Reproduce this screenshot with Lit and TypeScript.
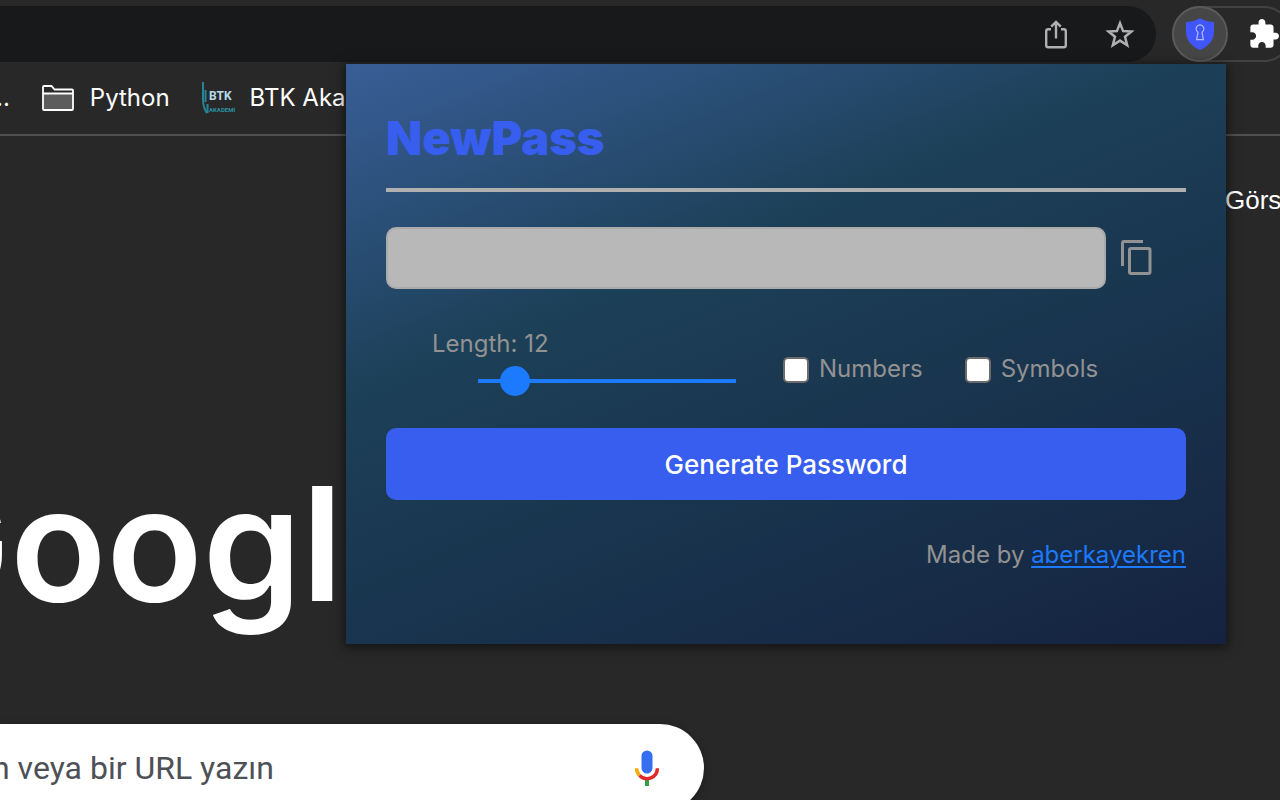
import { LitElement, html, css } from "lit";
import { customElement, state } from "lit/decorators.js";

@customElement("browser-chrome")
class BrowserChrome extends LitElement {
  static styles = css`
    :host {
      display: block;
      color: #fff;
      font-family: Inter, "Noto Sans", sans-serif;
    }
    .toolbar {
      display: flex;
      gap: 16px;
      padding: 6px 0 2px;
    }
    .address {
      flex: 1;
      display: flex;
      align-items: center;
      justify-content: flex-end;
      gap: 32px;
      height: 56px;
      padding-right: 20px;
      box-sizing: border-box;
      border-radius: 0 28px 28px 0;
      background: #18191b;
    }
    button {
      display: flex;
      align-items: center;
      justify-content: center;
      padding: 0;
      border: 0;
      background: none;
      color: inherit;
      font: inherit;
    }
    svg {
      display: block;
      flex: none;
    }
    .extensions {
      display: flex;
      align-items: center;
      gap: 21px;
      width: 120px;
      height: 56px;
      margin-right: -12px;
      box-sizing: border-box;
      border: 2px solid #424242;
      border-radius: 28px;
    }
    .active {
      flex: none;
      width: 56px;
      height: 56px;
      margin-left: -2px;
      box-sizing: border-box;
      border: 2px solid #5a5a5a;
      border-radius: 50%;
      background: #464646;
    }
    .puzzle {
      flex: none;
    }
    .bookmarks {
      display: flex;
      align-items: center;
      gap: 32px;
      height: 72px;
      margin-left: -4px;
      padding-bottom: 2px;
      box-sizing: border-box;
      border-bottom: 2px solid #505050;
      font-size: 24px;
      line-height: 32px;
    }
    .bookmarks a {
      display: flex;
      align-items: center;
      gap: 16px;
      color: inherit;
      text-decoration: none;
      white-space: nowrap;
    }
    .btk {
      display: block;
      width: 32px;
      height: 32px;
      overflow: visible;
    }
  `;

  render() {
    return html`
      <div class="toolbar">
        <div class="address">
          <button aria-label="Share">
            <svg width="32" height="32" viewBox="0 0 32 32" fill="none" stroke="#b0b0b0" stroke-width="2.4">
              <path d="M11 11.2H8.200Q6.200 11.200 6.200 13.200V27.200Q6.200 29.200 8.200 29.200H23.800Q25.800 29.200 25.800 27.200V13.200Q25.800 11.200 23.800 11.200H21" />
              <path d="M16 20.500V4M11.200 8.700L16 3.900L20.800 8.700" />
            </svg>
          </button>
          <button aria-label="Bookmark">
            <svg width="32" height="32" viewBox="0 0 32 32" fill="none" stroke="#b0b0b0" stroke-width="2.5">
              <path d="M16 5.200L19.100 13.100L27.400 13.500L21 18.800L23.200 27.200L16 22.600L8.800 27.200L11 18.800L4.600 13.500L12.900 13.100Z" />
            </svg>
          </button>
        </div>
        <div class="extensions">
          <button class="active" aria-label="NewPass">
            <svg width="32" height="36" viewBox="0 0 32 36">
              <path d="M16 2C12 4.500 7 6 2 6V16C2 24 8 31 16 34C24 31 30 24 30 16V6C25 6 20 4.500 16 2Z" fill="#4055fa" />
              <path d="M14 16.200A3.900 3.900 0 1 1 18 16.200L19.400 23.600H12.600Z" fill="none" stroke="#b4bcff" stroke-width="1.200" />
            </svg>
          </button>
          <button class="puzzle" aria-label="Extensions">
            <svg width="30" height="30" viewBox="1 1 22 22" fill="#fff">
              <path d="M20.500 11H19V7c0-1.100-.9-2-2-2h-4V3.500C13 2.120 11.880 1 10.500 1S8 2.120 8 3.500V5H4c-1.100 0-1.990.9-1.990 2v3.800H3.500c1.490 0 2.700 1.210 2.700 2.700s-1.210 2.700-2.700 2.700H2V20c0 1.100.9 2 2 2h3.800v-1.500c0-1.490 1.210-2.700 2.700-2.700s2.700 1.210 2.700 2.700V22H17c1.100 0 2-.9 2-2v-4h1.500c1.380 0 2.500-1.120 2.500-2.500S21.880 11 20.500 11z" />
            </svg>
          </button>
        </div>
      </div>
      <nav class="bookmarks">
        <a href="#">..</a>
        <a href="#">
          <svg width="32" height="26" viewBox="0 0 32 26">
            <path d="M1 8.500H31V25H1Z" fill="#5c5c5c" />
            <path d="M1 8.500H31M2 1H9.500L12.500 4.500H30Q31 4.500 31 5.500V24Q31 25 30 25H2Q1 25 1 24V2Q1 1 2 1Z" fill="none" stroke="#fff" stroke-width="1.800" />
          </svg>
          <span>Python</span>
        </a>
        <a href="#">
          <svg class="btk" viewBox="0 0 32 32">
            <path d="M1 0V18Q1.500 27 5 31M3.500 8V20M5.500 22V31" fill="none" stroke="#268494" stroke-width="2" />
            <text x="7" y="18" font-family="Roboto, sans-serif" font-weight="700" font-size="12" fill="#b5dcea">BTK</text>
            <text x="7" y="30" font-family="Roboto, sans-serif" font-weight="700" font-size="6" fill="#2794a4">AKADEMİ</text>
          </svg>
          <span>BTK Aka</span>
        </a>
      </nav>
    `;
  }
}

@customElement("start-page")
class StartPage extends LitElement {
  static styles = css`
    :host {
      display: flex;
      flex-direction: column;
      align-items: flex-start;
      color: #fff;
    }
    .links {
      align-self: flex-end;
      width: 55px;
      padding-top: 48px;
      overflow: hidden;
      color: inherit;
      font: 26px/32px "Liberation Sans", sans-serif;
      text-decoration: none;
      white-space: nowrap;
    }
    .wordmark {
      margin: 228px 0 0 -108px;
      font: 600 158px/200px Inter, sans-serif;
    }
    .search {
      display: flex;
      align-items: center;
      width: 55%;
      height: 88px;
      margin-top: 80px;
      box-sizing: border-box;
      padding-right: 41px;
      border-radius: 0 44px 44px 0;
      background: #fff;
      box-shadow: 0 2px 8px rgba(0, 0, 0, 0.3);
    }
    input {
      flex: 1;
      min-width: 0;
      height: 48px;
      margin-left: -8px;
      padding: 0;
      border: 0;
      outline: 0;
      background: none;
      color: #4d5156;
      font: 32px/48px Roboto, sans-serif;
    }
    input::placeholder {
      color: #4d5156;
      opacity: 1;
    }
    button {
      padding: 0;
      border: 0;
      background: none;
    }
    svg {
      display: block;
    }
  `;

  render() {
    return html`
      <a class="links" href="#">Görs</a>
      <div class="wordmark">Google</div>
      <form class="search">
        <input aria-label="Search" placeholder="n veya bir URL yazın" />
        <button type="button" aria-label="Voice search">
          <svg width="32" height="40" viewBox="0 0 32 40">
            <rect x="10.500" y="2.500" width="11" height="23" rx="5.500" fill="#356ef1" />
            <path d="M14 31H18V38H14Z" fill="#34a048" />
            <path d="M5.600 20.200A10.400 10.400 0 0 0 8.500 27.400" fill="none" stroke="#f4ab0c" stroke-width="3.500" />
            <path d="M8.500 27.400A10.400 10.400 0 0 0 26.400 20.200" fill="none" stroke="#e02a2a" stroke-width="3.500" />
          </svg>
        </button>
      </form>
    `;
  }
}

@customElement("password-popup")
class PasswordPopup extends LitElement {
  static styles = css`
    :host {
      display: block;
      box-sizing: border-box;
      padding: 48px 40px 73px;
      background: linear-gradient(158deg, #395e97, #1c4057 36%, #152340);
      box-shadow: 0 2px 10px 2px rgba(0, 0, 0, 0.5);
      color: #929292;
      font: 24px/32px Inter, sans-serif;
    }
    h1 {
      margin: 0;
      padding-bottom: 24px;
      border-bottom: 4px solid #b0b0b0;
      color: #375eee;
      font: 900 47px/52px Inter, sans-serif;
    }
    .result {
      display: flex;
      align-items: center;
      gap: 12px;
      margin-top: 35px;
    }
    .result input {
      width: 90%;
      height: 62px;
      box-sizing: border-box;
      padding: 0 16px;
      border: 2px solid #aaa;
      border-radius: 10px;
      background: #b8b8b8;
      font: inherit;
    }
    button {
      padding: 0;
      border: 0;
      background: none;
    }
    svg {
      display: block;
    }
    .options {
      display: flex;
      margin-top: 39px;
      padding-left: 46px;
    }
    .length {
      width: 305px;
    }
    .length label {
      display: block;
    }
    .length input {
      appearance: none;
      display: block;
      width: 258px;
      height: 30px;
      margin: 6px 0 0 46px;
      background: linear-gradient(#1c7aff, #1c7aff) center / 100% 4px no-repeat;
    }
    .length input::-webkit-slider-thumb {
      appearance: none;
      width: 30px;
      height: 30px;
      border-radius: 50%;
      background: #1c7aff;
    }
    .check {
      display: flex;
      align-items: center;
      gap: 10px;
      height: 32px;
      margin: 25px 0 0 46px;
    }
    .check + .check {
      margin-left: 42px;
    }
    .check input {
      appearance: none;
      width: 26px;
      height: 26px;
      margin: 2px 0 0;
      box-sizing: border-box;
      border: 2px solid #6b6b6b;
      border-radius: 5px;
      background: #fff;
    }
    .generate {
      display: block;
      width: 100%;
      height: 72px;
      margin-top: 32px;
      padding-top: 2px;
      border-radius: 10px;
      background: #375eee;
      color: #fff;
      font: 500 26px/32px Inter, sans-serif;
    }
    .credit {
      margin: 39px 0 0;
      text-align: right;
    }
    .credit a {
      color: #1c7aff;
      text-underline-offset: 3px;
      text-decoration-thickness: 2px;
    }
  `;

  @state() private length = 12;

  render() {
    return html`
      <h1>NewPass</h1>
      <div class="result">
        <input aria-label="Password" readonly />
        <button aria-label="Copy password">
          <svg width="36" height="36" viewBox="0 0 36 36" fill="none" stroke="#929292" stroke-width="3">
            <path d="M25 1.500H6Q4.500 1.500 4.500 3V26" />
            <rect x="11.500" y="8.500" width="20.500" height="25" rx="1.500" />
          </svg>
        </button>
      </div>
      <div class="options">
        <div class="length">
          <label for="length">Length: ${this.length}</label>
          <input
            id="length"
            type="range"
            min="8"
            max="49"
            .value=${String(this.length)}
            @input=${(e: Event) => (this.length = Number((e.target as HTMLInputElement).value))}
          />
        </div>
        <label class="check"><input type="checkbox" />Numbers</label>
        <label class="check"><input type="checkbox" />Symbols</label>
      </div>
      <button class="generate">Generate Password</button>
      <p class="credit">Made by <a href="#">aberkayekren</a></p>
    `;
  }
}

@customElement("app-root")
class AppRoot extends LitElement {
  static styles = css`
    :host {
      display: block;
      position: relative;
      height: 100vh;
      overflow: hidden;
      background: #282828;
    }
    .popup {
      position: absolute;
      top: 64px;
      right: 54px;
      width: 880px;
    }
  `;

  render() {
    return html`
      <browser-chrome></browser-chrome>
      <start-page></start-page>
      <password-popup class="popup"></password-popup>
    `;
  }
}
